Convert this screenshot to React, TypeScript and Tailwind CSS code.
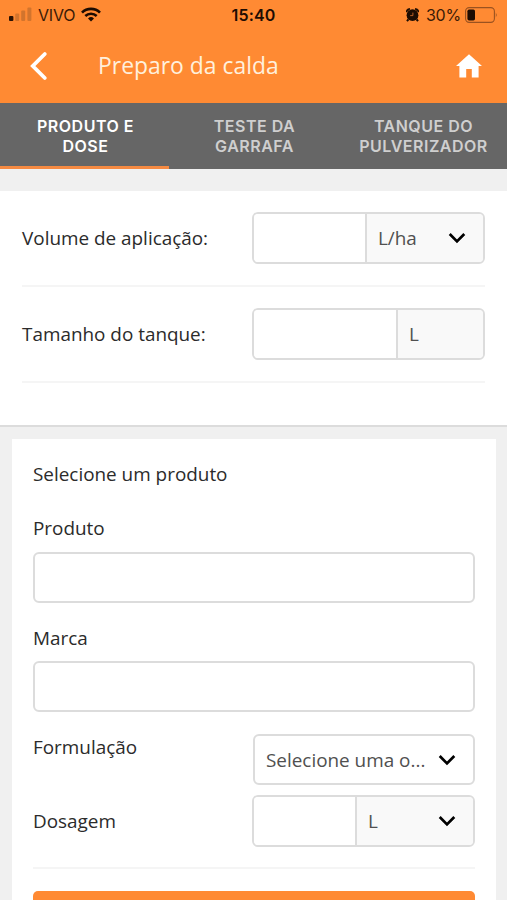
import React, { useState } from 'react';

// --- TYPE DEFINITIONS ---
interface Tab {
  id: string;
  lines: string[];
}

// --- STATIC DATA ---
const tabs: Tab[] = [
  { id: 'produto', lines: ['PRODUTO E', 'DOSE'] },
  { id: 'garrafa', lines: ['TESTE DA', 'GARRAFA'] },
  { id: 'tanque', lines: ['TANQUE DO', 'PULVERIZADOR'] },
];

// --- ICONS ---
const Chevron = () => (
  <svg width="18" height="12" viewBox="0 0 18 12" fill="none" className="shrink-0">
    <path d="M1.7 2 L9 9.4 L16.3 2" stroke="#000" strokeWidth="2.7" />
  </svg>
);

const SignalIcon = () => (
  <svg width="23" height="15" viewBox="0 0 23 15" fill="#2a1204">
    <rect x="0" y="9" width="4.4" height="5" rx="1" />
    <rect x="6.2" y="6.5" width="4" height="7.5" rx="1" fill="#d2742d" />
    <rect x="12.2" y="3.5" width="4" height="10.5" rx="1" fill="#d2742d" />
    <rect x="18.4" y="0.5" width="4" height="13.5" rx="1" fill="#d2742d" />
  </svg>
);

const WifiIcon = () => (
  <svg width="20" height="15" viewBox="0 0 20 15" fill="none" stroke="#1d0c02">
    <path d="M1 5.6 A12.8 12.8 0 0 1 19 5.6" strokeWidth="2.7" />
    <path d="M4.3 9 A8.1 8.1 0 0 1 15.7 9" strokeWidth="2.5" />
    <path d="M10 14.6 L7 11.5 A4.3 4.3 0 0 1 13 11.5 Z" fill="#1d0c02" stroke="none" />
  </svg>
);

const AlarmIcon = () => (
  <svg width="13" height="14" viewBox="0 0 13 14">
    <circle cx="6.5" cy="7.2" r="5.9" fill="#1d0c02" />
    <path d="M0.5 4 Q0 0.5 4 0.8 Z M12.5 4 Q13 0.5 9 0.8 Z" fill="#1d0c02" stroke="#1d0c02" strokeWidth="1" />
    <path d="M2.4 11.4 L1 13.2 M10.6 11.4 L12 13.2" stroke="#1d0c02" strokeWidth="2" />
    <path d="M6.9 4.6 V7.6 H4.2" stroke="#c9692b" strokeWidth="0.9" fill="none" />
  </svg>
);

const BatteryIcon = () => (
  <svg width="33" height="16" viewBox="0 0 33 16">
    <rect x="0.6" y="0.6" width="28.8" height="14.8" rx="3.6" fill="none" stroke="#9a5220" strokeWidth="1.1" />
    <rect x="2.4" y="2.6" width="7.6" height="10.8" rx="1.6" fill="#1d0c02" />
    <path d="M30.8 5.6 Q32.6 8 30.8 10.4 Z" fill="#9a5220" />
  </svg>
);

const HomeIcon = () => (
  <svg width="26" height="24" viewBox="0 0 26 24" fill="#fff">
    <path d="M13 0.2 L26 12 H22.6 V23.4 H15.8 V15 H10.2 V23.4 H3.4 V12 H0 Z" />
  </svg>
);

// --- SUB-COMPONENT: input with the unit attached on the right ---
const UnitInput = ({ unit, unitWidth, dropdown }: { unit: string; unitWidth: string; dropdown?: boolean }) => (
  <div className="flex flex-1 h-[52px] border-2 border-[#dcdcdc] rounded-md overflow-hidden">
    <input className="flex-1 min-w-0 bg-white outline-none" />
    <div className={`flex items-center justify-between pl-[11px] border-l-2 border-[#dcdcdc] bg-[#f9f9f9] text-[#505050] ${unitWidth}`}>
      <span>{unit}</span>
      {dropdown && <Chevron />}
    </div>
  </div>
);

// --- MAIN PAGE COMPONENT ---
export default function App() {
  const [activeTab, setActiveTab] = useState('produto');

  return (
    <div className="h-[900px] overflow-hidden bg-[#f0f0f0] font-['Open_Sans',sans-serif] text-[18.9px] leading-[26px] text-[#2b2b2b]">
      {/* Header */}
      <header className="h-[103px] bg-[#ff8a33]">
        <div className="grid grid-cols-3 items-center h-[29px] px-[9px] font-['Inter',sans-serif] text-[16px] text-[#3a1a06]">
          <div className="flex items-center">
            <SignalIcon />
            <span className="ml-[6px] mr-[6px] tracking-[-0.2px]">VIVO</span>
            <WifiIcon />
          </div>
          <div className="text-center font-semibold tracking-[0.2px] text-[#1d0c02]">15:40</div>
          <div className="flex items-center justify-end">
            <AlarmIcon />
            <span className="ml-[7px] mr-[4px] tracking-[-0.2px]">30%</span>
            <BatteryIcon />
          </div>
        </div>
        <div className="flex items-center h-[73px] pl-[29px] pr-[25px]">
          <button>
            <svg width="19" height="30" viewBox="0 0 19 30" fill="none">
              <path d="M15.8 3 L3.8 15 L15.8 27" stroke="#fff" strokeWidth="3.8" strokeLinecap="round" />
            </svg>
          </button>
          <h1 className="flex-1 ml-[50px] text-[22.9px] text-[#fff0dc]">Preparo da calda</h1>
          <button><HomeIcon /></button>
        </div>
      </header>

      {/* Tabs */}
      <nav className="grid grid-cols-3 h-[66px] bg-[#666666] font-['Inter',sans-serif] text-[16px] leading-[19.5px] font-semibold tracking-[0.5px]">
        {tabs.map((tab) => (
          <button
            key={tab.id}
            onClick={() => setActiveTab(tab.id)}
            className={`flex flex-col items-center pt-[14px] pl-[2px] border-b-3 ${activeTab === tab.id ? 'border-[#f58a42] text-white' : 'border-transparent text-[#cfcfcf]'}`}
          >
            {tab.lines.map((line) => (
              <span key={line} className="whitespace-nowrap">{line}</span>
            ))}
          </button>
        ))}
      </nav>

      {/* Volume and tank size */}
      <section className="mt-[22px] h-[236px] px-[22px] bg-white border-b-2 border-[#dcdcdc]">
        <div className="flex items-center h-[96px] border-b-2 border-[#f5f5f5]">
          <label className="w-[230px]">Volume de aplicação:</label>
          <UnitInput unit="L/ha" unitWidth="w-[118px] pr-[17px]" dropdown />
        </div>
        <div className="flex items-center h-[96px] border-b-2 border-[#f5f5f5]">
          <label className="w-[230px]">Tamanho do tanque:</label>
          <UnitInput unit="L" unitWidth="w-[87px]" />
        </div>
      </section>

      {/* Product card */}
      <section className="mt-[12px] ml-[12px] mr-[11px] h-[480px] px-[21px] pt-[22px] bg-white">
        <h2>Selecione um produto</h2>
        <label className="block mt-[28px]">Produto</label>
        <input className="block mt-[11px] w-full h-[51px] border-2 border-[#dcdcdc] rounded-md outline-none" />
        <label className="block mt-[22px]">Marca</label>
        <input className="block mt-[10px] w-full h-[51px] border-2 border-[#dcdcdc] rounded-md outline-none" />
        <div className="flex mt-[22px]">
          <label className="w-[220px]">Formulação</label>
          <div className="flex flex-1 items-center justify-between h-[51px] pl-[11px] pr-[17px] border-2 border-[#dcdcdc] rounded-md text-[#505050]">
            <span className="whitespace-nowrap">Selecione uma o...</span>
            <Chevron />
          </div>
        </div>
        <div className="flex items-center mt-[10px]">
          <label className="w-[219px]">Dosagem</label>
          <UnitInput unit="L" unitWidth="w-[118px] pr-[17px]" dropdown />
        </div>
        <hr className="mt-[20px] border-t-2 border-[#f5f5f5]" />
        <button className="block mt-[22px] w-full h-[51px] bg-[#ff8a33] rounded-[5px]" />
      </section>
    </div>
  );
}
